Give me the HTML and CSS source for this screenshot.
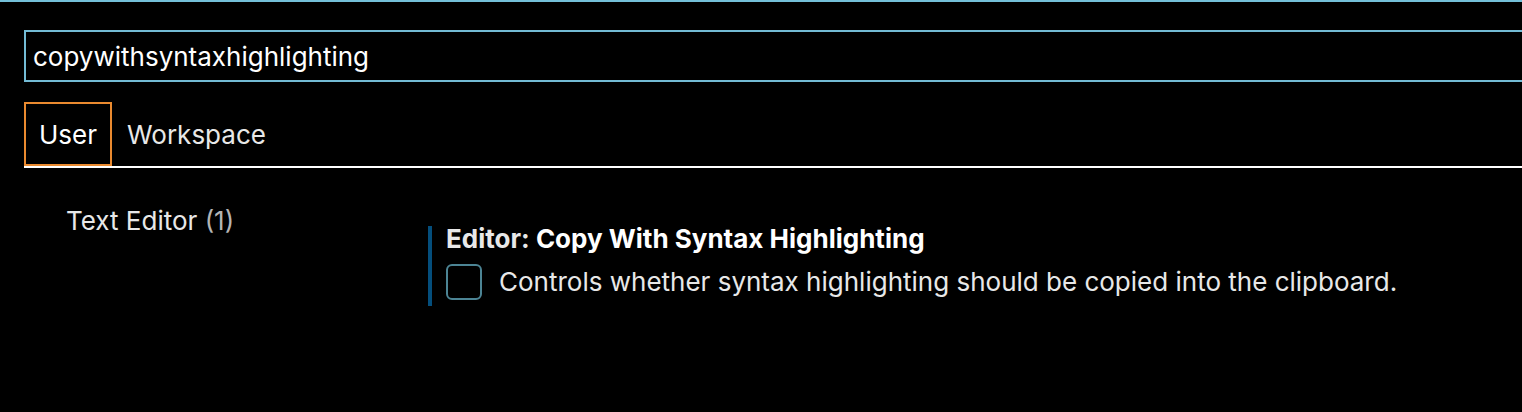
FILE: index.html
```html
<!DOCTYPE html>
<html lang="en">
<head>
<meta charset="utf-8">
<title>Settings</title>
<link rel="stylesheet" href="styles.css">
</head>
<body>
<main class="settings">
  <input class="search" type="text" aria-label="Search settings" value="copywithsyntaxhighlighting" spellcheck="false">
  <div class="tabs" role="tablist">
    <button class="tab tab-active" type="button" role="tab" aria-selected="true">User</button>
    <button class="tab" type="button" role="tab" aria-selected="false">Workspace</button>
  </div>
  <div class="body">
    <nav class="toc"><a class="toc-link" href="#editor">Text Editor <span class="count">(1)</span></a></nav>
    <section class="setting" id="editor">
      <h2 class="title"><span class="category">Editor:</span> Copy With Syntax Highlighting</h2>
      <div class="option">
        <input class="check" type="checkbox" id="copy-syntax">
        <label for="copy-syntax">Controls whether syntax highlighting should be copied into the clipboard.</label>
      </div>
    </section>
  </div>
</main>
</body>
</html>
```
FILE: styles.css
```css
* {
  box-sizing: border-box;
}

body {
  margin: 0;
  background: #000;
  color: #e8e8e8;
  font-family: Inter, "Liberation Sans", sans-serif;
  font-size: 26px;
  line-height: 32px;
}

.settings {
  min-height: 100vh;
  padding: 28px 0 0 24px;
  border-top: 2px solid #73bfd8;
  overflow: hidden;
}

.search {
  display: block;
  width: 100%;
  height: 52px;
  padding: 0 7px;
  border: 2px solid #73bbd5;
  border-right: 0;
  border-radius: 0;
  outline: 0;
  background: #000;
  color: #fff;
  font: inherit;
}

.tabs {
  display: flex;
  margin-top: 20px;
  border-bottom: 2px solid #fff;
}

.tab {
  height: 64px;
  padding: 2px 13px 0;
  border: 2px solid transparent;
  background: none;
  color: #e8e8e8;
  font: inherit;
}

.tab-active {
  border-color: #ea8a2f;
  color: #fff;
}

.body {
  display: flex;
  padding-top: 37px;
}

.toc {
  flex: 0 0 404px;
  padding-left: 42px;
}

.toc-link {
  color: inherit;
  text-decoration: none;
}

.count {
  color: #b4b4b4;
}

.setting {
  margin-top: 21px;
  padding: 0 0 6px 14px;
  border-left: 4px solid #044e7c;
}

.title {
  margin: 0;
  padding-bottom: 12px;
  color: #fff;
  font-size: 26px;
  font-weight: 700;
  line-height: 26px;
}

.category {
  color: #e8e8e8;
}

.option {
  display: flex;
  align-items: center;
  gap: 17px;
}

.check {
  flex: none;
  width: 36px;
  height: 36px;
  margin: 0;
  appearance: none;
  border: 2px solid #4c8494;
  border-radius: 6px;
  background: #000;
}
```
